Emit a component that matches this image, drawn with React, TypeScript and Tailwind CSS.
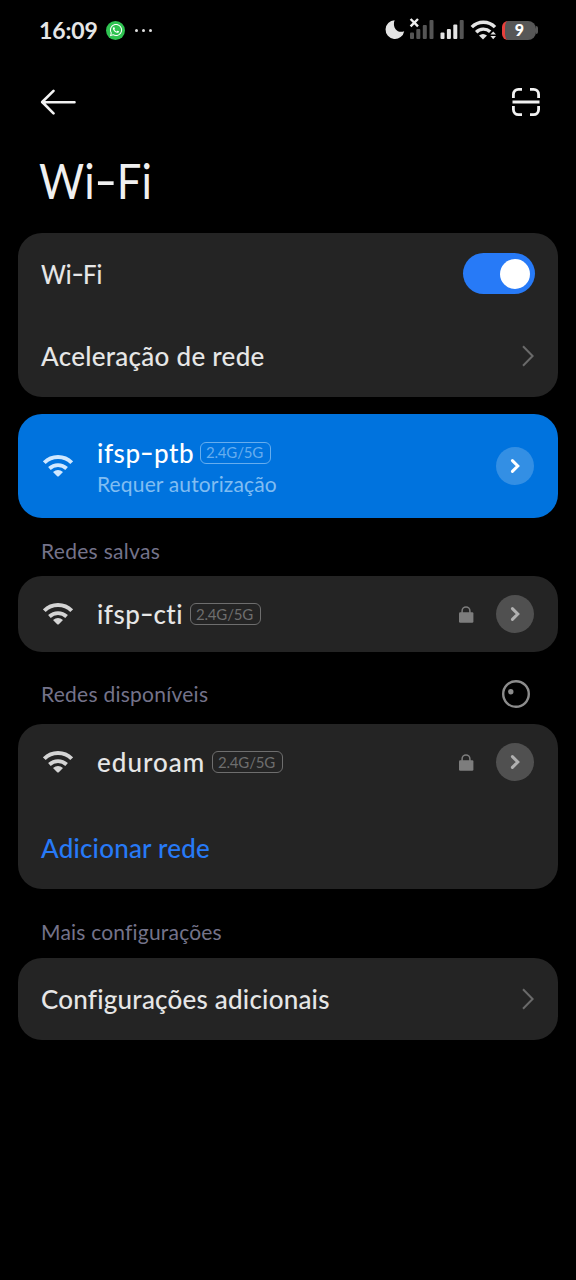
import type { ReactNode } from 'react'
import { FaWhatsapp } from 'react-icons/fa'

function StatusBar() {
  return (
    <div className="flex h-[60px] items-center justify-between pl-[39px] pr-[38px]">
      <div className="flex items-center">
        <span className="w-[58px] whitespace-nowrap text-[23px] font-bold leading-7 tracking-[-0.1px] text-[#e6e6e6]">16:09</span>
        <span className="ml-[9px] flex size-[19px] items-center justify-center rounded-full bg-[#2fc351]">
          <FaWhatsapp className="size-3.5 text-white" />
        </span>
        <span className="ml-[10px] flex gap-1">
          <i className="size-[3px] rounded-full bg-[#e0e0e0]" />
          <i className="size-[3px] rounded-full bg-[#e0e0e0]" />
          <i className="size-[3px] rounded-full bg-[#e0e0e0]" />
        </span>
      </div>
      <div className="flex items-center">
        <svg className="h-6 w-[20px]" viewBox="0 0 20 24" fill="#e4e4e4">
          <path d="M9.6 2.2A9.4 9.4 0 1 0 19.2 13.2C15.6 14.6 12.4 13.6 10.6 11.2C8.7 8.7 8.4 5.2 9.6 2.2Z" />
        </svg>
        <svg className="ml-[4px] h-6 w-[26px]" viewBox="0 0 26 24">
          <g fill="#555">
            <rect x="1" y="14.5" width="4" height="6.5" rx="1" />
            <rect x="7.3" y="11" width="4" height="10" rx="1" />
            <rect x="13.8" y="7" width="4" height="14" rx="1" />
            <rect x="20.5" y="2" width="4" height="19" rx="1" />
          </g>
          <path d="M1.6 1L9 8.4M9 1L1.6 8.4" stroke="#eee" strokeWidth="2.4" />
        </svg>
        <svg className="ml-[4px] h-6 w-[26px]" viewBox="0 0 26 24" fill="#e4e4e4">
          <rect x="1.5" y="14.5" width="4" height="6.5" rx="1" />
          <rect x="7.9" y="11" width="4" height="10" rx="1" />
          <rect x="14.3" y="6.5" width="4" height="14.5" rx="1" />
          <rect x="20.7" y="2" width="4" height="19" rx="1" fill="#555" />
        </svg>
        <svg className="ml-[5px] h-6 w-[27px]" viewBox="0 0 27 24" fill="none" stroke="#e4e4e4">
          <path d="M1.8 9.2A16 16 0 0 1 25 9.2" strokeWidth="3.4" />
          <path d="M6.2 14.2A10 10 0 0 1 20.2 13.8" strokeWidth="3.4" />
          <path d="M9 17.4Q13 14.4 17 17.4L13 21.4Z" fill="#e4e4e4" stroke="none" />
          <path d="M20.4 16.6L23.2 13.4L26 16.6ZM20.4 18L23.2 21.2L26 18Z" fill="#e4e4e4" stroke="none" />
        </svg>
        <div className="ml-[5px] flex items-center">
          <div className="flex h-[19px] w-[34px] items-center justify-center overflow-hidden rounded-l-md rounded-r-lg border-l-[3px] border-[#e8403c] bg-[#575757] pr-[2px]">
            <span className="text-[16px] font-black leading-none text-white">9</span>
          </div>
          <i className="h-2 w-[2px] rounded-r-sm bg-[#575757]" />
        </div>
      </div>
    </div>
  )
}

function WifiIcon({ className }: { className: string }) {
  return (
    <svg className={className} viewBox="0 0 30 22" fill="none" stroke="currentColor">
      <path d="M1.3 7.7A19.4 19.4 0 0 1 28.7 7.7" strokeWidth="4" />
      <path d="M6.4 13.5A12.6 12.6 0 0 1 23.6 13.5" strokeWidth="3.8" />
      <path d="M10 17.1Q15 12.8 20 17.1L15.8 21.2Q15 22 14.2 21.2Z" fill="currentColor" stroke="none" />
    </svg>
  )
}

function Chevron() {
  return (
    <svg className="mr-px h-[22px] w-3" viewBox="0 0 12 22" fill="none" stroke="#6a6a6a" strokeWidth="2">
      <path d="M1 1.2L10.6 11L1 20.8" />
    </svg>
  )
}

function LockIcon() {
  return (
    <svg className="h-[17px] w-[15px]" viewBox="0 0 15 17">
      <rect x="0" y="6.3" width="14.4" height="10.4" rx="1.2" fill="#7d7d7d" />
      <path d="M3.1 7V4.9A3.9 3.9 0 0 1 10.9 4.9V7" fill="none" stroke="#7d7d7d" strokeWidth="1.5" />
    </svg>
  )
}

function DetailButton({ active }: { active?: boolean }) {
  return (
    <button
      className={`flex size-[38px] items-center justify-center rounded-full ${
        active ? 'bg-[#338fe4] text-white' : 'bg-[#505050] text-[#b0b0b0]'
      }`}
    >
      <svg className="h-4 w-[10px]" viewBox="0 0 10 16" fill="none" stroke="currentColor" strokeWidth="3" strokeLinecap="round">
        <path d="M2.4 2.6L7.8 8L2.4 13.4" />
      </svg>
    </button>
  )
}

function Band({ active }: { active?: boolean }) {
  return (
    <span
      className={`flex h-[22px] w-[71px] items-center justify-center rounded-md border-[1.5px] pr-[2px] text-[15px] leading-none tracking-[-0.2px] ${
        active ? 'border-[#66adee] text-[#66adee]' : 'border-[#6e6e6e] text-[#6e6e6e]'
      }`}
    >
      2.4G/5G
    </span>
  )
}

// Hyphens are drawn wider than the font has them
function Dashed({ text }: { text: string }) {
  const [head, ...rest] = text.split('-')
  return (
    <>
      {head}
      {rest.map((part) => (
        <span key={part}>
          <span className="mx-[0.06em] inline-block -translate-y-[0.03em] scale-x-[1.45]">-</span>
          {part}
        </span>
      ))}
    </>
  )
}

function NetworkRow({ name, nameClass }: { name: string; nameClass: string }) {
  return (
    <div className="flex h-[76px] items-center pl-[25px] pr-6">
      <WifiIcon className="mb-px h-[22px] w-[30px] text-[#d4d4d4]" />
      <span className={`ml-6 whitespace-nowrap text-[26px] font-medium leading-8 text-[#e6e6e6] ${nameClass}`}>
        <Dashed text={name} />
      </span>
      <Band />
      <div className="ml-auto flex items-center gap-[22px]">
        <LockIcon />
        <DetailButton />
      </div>
    </div>
  )
}

function Row({ label, labelClass = 'tracking-[0.28px]', children }: { label: string; labelClass?: string; children?: ReactNode }) {
  return (
    <div className="flex h-[82px] items-center justify-between px-[23px]">
      <span className={`whitespace-nowrap text-[26px] font-medium leading-8 text-[#e6e6e6] ${labelClass}`}>
        <Dashed text={label} />
      </span>
      {children}
    </div>
  )
}

export default function App() {
  return (
    <main className="h-[1280px] w-[576px] overflow-hidden bg-black font-[Lato,sans-serif]">
      <StatusBar />

      <header className="flex h-[84px] items-center justify-between pl-10 pr-[35px]">
        <svg className="h-[26px] w-9" viewBox="0 0 36 26" fill="none" stroke="#f2f2f2" strokeWidth="2.6" strokeLinecap="round" strokeLinejoin="round">
          <path d="M13.5 1.8L2.2 13L13.5 24.4M2.2 13.2H34.5" />
        </svg>
        <svg className="size-[30px]" viewBox="0 0 30 30" fill="none" stroke="#f2f2f2" strokeWidth="2.8">
          <path d="M2.4 11V7.4A5 5 0 0 1 7.4 2.4H11M19 2.4H22.6A5 5 0 0 1 27.6 7.4V11M2.4 19V22.6A5 5 0 0 0 7.4 27.6H11M19 27.6H22.6A5 5 0 0 0 27.6 22.6V19M1.5 15H28.5" />
        </svg>
      </header>

      <h1 className="ml-[39px] h-[89px] origin-left scale-x-[0.89] pt-[8px] text-[49px] leading-[56px] tracking-[0.3px] text-[#f0f0f0]">
        <Dashed text="Wi-Fi" />
      </h1>

      <section className="mx-[18px] h-[164px] rounded-3xl bg-[#242424]">
        <Row label="Wi-Fi" labelClass="origin-left scale-x-[0.92] tracking-[-0.1px]">
          <span className="mb-px flex h-[41px] w-[72px] items-center justify-end rounded-full bg-[#277af7] pr-[5px]">
            <i className="size-[30px] rounded-full bg-white" />
          </span>
        </Row>
        <Row label="Aceleração de rede">
          <Chevron />
        </Row>
      </section>

      <section className="mx-[18px] mt-[17px] flex h-[104px] items-center rounded-3xl bg-[#0073de] pl-[25px] pr-6">
        <WifiIcon className="h-[22px] w-[30px] text-[#d0e8ff]" />
        <div className="ml-6 pt-[3px]">
          <div className="flex items-center">
            <span className="w-[103px] whitespace-nowrap text-[26px] font-medium leading-8 tracking-[0.55px] text-white">
              <Dashed text="ifsp-ptb" />
            </span>
            <Band active />
          </div>
          <p className="text-[21px] leading-[30px] tracking-[0.15px] text-[#80bdf2]">Requer autorização</p>
        </div>
        <div className="ml-auto">
          <DetailButton active />
        </div>
      </section>

      <h2 className="flex h-[58px] items-center pl-[41px] pt-[7px] text-[21px] tracking-[0.3px] text-[#74738a]">Redes salvas</h2>
      <section className="mx-[18px] rounded-3xl bg-[#242424]">
        <NetworkRow name="ifsp-cti" nameClass="w-[93px] tracking-[0.45px]" />
      </section>

      <div className="flex h-[72px] items-center justify-between pl-[41px] pr-[45px] pt-[12px]">
        <h2 className="text-[21px] tracking-[0.25px] text-[#74738a]">Redes disponíveis</h2>
        <svg className="size-[30px]" viewBox="0 0 30 30">
          <circle cx="15" cy="15" r="12.8" fill="none" stroke="#8c8c8c" strokeWidth="2.4" />
          <circle cx="9.8" cy="12.7" r="2.7" fill="#8c8c8c" />
        </svg>
      </div>
      <section className="mx-[18px] h-[165px] rounded-3xl bg-[#242424]">
        <NetworkRow name="eduroam" nameClass="w-[115px] tracking-[1px]" />
        <div className="flex h-[89px] items-center pb-px pl-[23px] pt-[9px] text-[26px] font-medium tracking-[0.2px] text-[#277af7]">
          Adicionar rede
        </div>
      </section>

      <h2 className="flex h-[69px] items-center pl-[41px] pt-[16px] text-[21px] tracking-[0.2px] text-[#74738a]">Mais configurações</h2>
      <section className="mx-[18px] rounded-3xl bg-[#242424]">
        <Row label="Configurações adicionais" labelClass="tracking-[0.22px]">
          <Chevron />
        </Row>
      </section>
    </main>
  )
}
